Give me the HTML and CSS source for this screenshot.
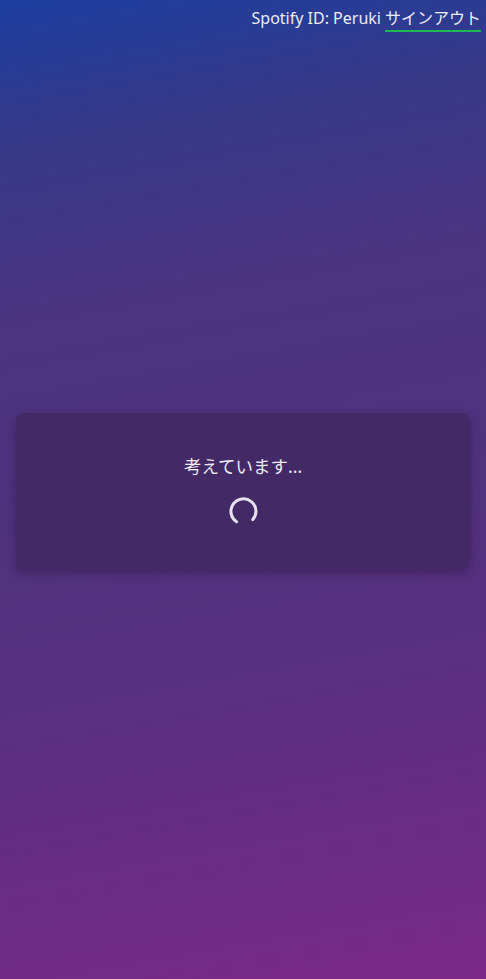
FILE: index.html
```html
<!DOCTYPE html>
<html lang="ja">
<head>
<meta charset="utf-8">
<link rel="stylesheet" href="styles.css">
</head>
<body>
<div class="page">
  <header class="topbar">
    <span class="user">Spotify ID: Peruki</span>
    <a class="signout">サインアウト</a>
  </header>
  <main class="main">
    <section class="card">
      <p class="msg">考えています...</p>
      <svg class="spinner" width="32" height="32" viewBox="0 0 32 32">
        <path d="M9.6 25.8 A12.5 12.5 0 1 1 25.8 23.6" fill="none" stroke="#e6e3ee" stroke-width="3" stroke-linecap="round"/>
      </svg>
    </section>
  </main>
</div>
</body>
</html>
```
FILE: styles.css
```css
html, body {
  margin: 0;
  padding: 0;
  height: 100%;
}
body {
  font-family: "Noto Sans", "Noto Sans CJK JP", sans-serif;
  color: #ececf4;
}
.page {
  min-height: 100vh;
  box-sizing: border-box;
  background: linear-gradient(170deg, #1d3fa0 0%, #363888 14%, #4a3480 30%, #4f327c 50%, #5c2f80 72%, #7a2986 100%);
  display: flex;
  flex-direction: column;
}
.topbar {
  display: flex;
  justify-content: flex-end;
  align-items: baseline;
  gap: 4px;
  padding: 7px 5px 0 0;
  font-size: 16px;
  line-height: 22px;
}
.signout {
  border-bottom: 2px solid #1db954;
  padding-bottom: 1px;
}
.main {
  flex: 1;
  display: flex;
  align-items: flex-start;
  padding: 381px 16px 0 16px;
}
.card {
  flex: 1;
  height: 156px;
  box-sizing: border-box;
  background: #432966;
  border-radius: 8px;
  box-shadow: 0 4px 10px rgba(30, 10, 50, 0.35);
  display: flex;
  flex-direction: column;
  align-items: center;
  padding-top: 42px;
}
.msg {
  margin: 0;
  font-size: 17.5px;
  line-height: 22px;
}
.spinner {
  margin-top: 19px;
}
```
